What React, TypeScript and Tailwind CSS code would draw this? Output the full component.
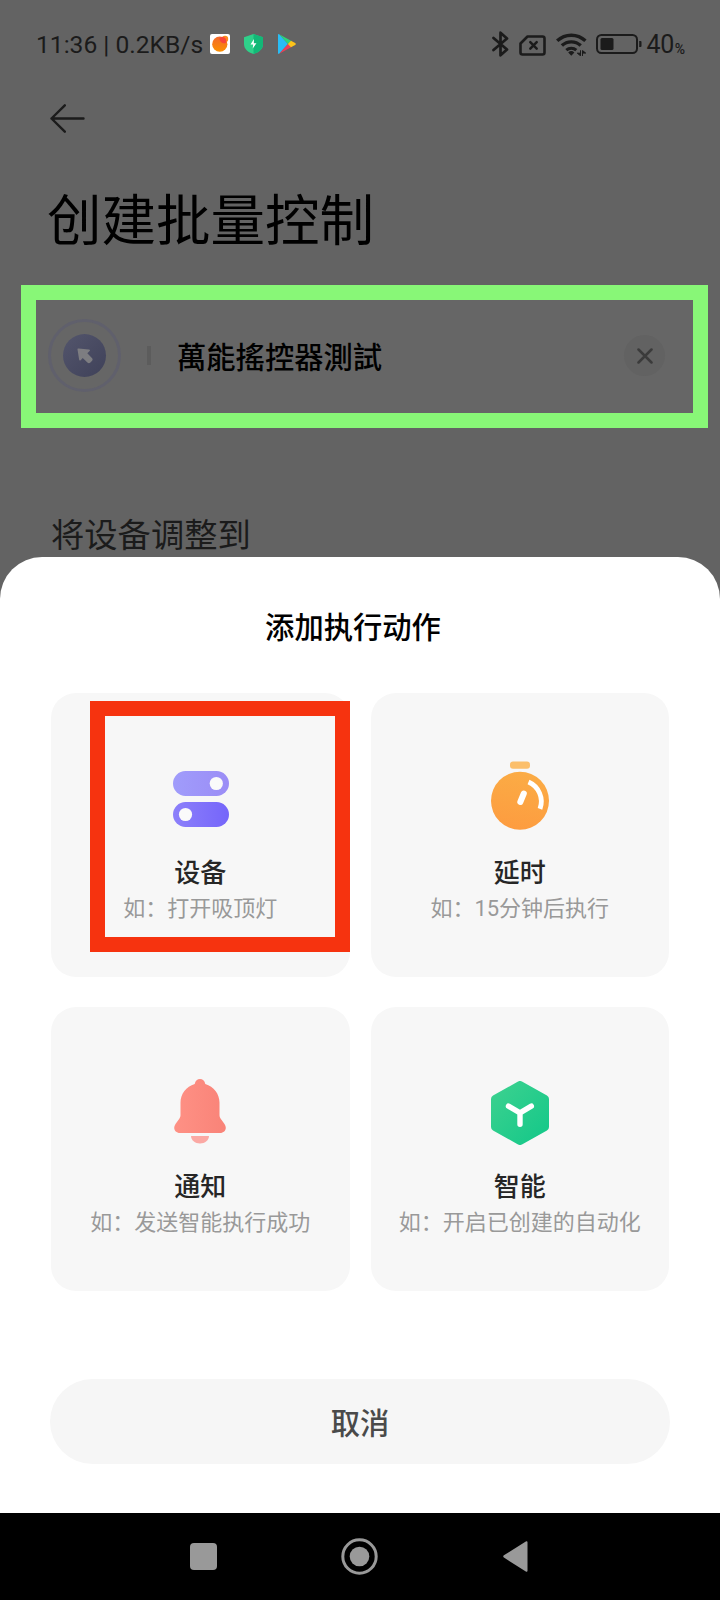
import React from 'react';

function StatusBar() {
  return (
    <div className="h-[88px] pl-[36px] pr-[35px] flex items-center justify-between text-[#1b1b1b]">
      <div className="flex items-center">
        <span className="w-[174px] mt-[2px] text-[24.600px] leading-8 whitespace-nowrap">11:36 | 0.2KB/s</span>
        <svg width="20" height="20" viewBox="0 0 20 20" className="mr-[14px]">
          <defs>
            <linearGradient id="orange" x1="0" y1="0" x2="0" y2="1">
              <stop offset="0" stopColor="#f4682c" />
              <stop offset="1" stopColor="#fb9000" />
            </linearGradient>
          </defs>
          <rect width="20" height="20" rx="2" fill="#fff" />
          <circle cx="9.800" cy="10.200" r="7.600" fill="url(#orange)" />
          <circle cx="15" cy="5" r="3.200" fill="#fb8a1c" />
          <path d="M9.400 4.500c1.500-1.800 4.500-2 6-.3 1.200 1.400 1.300 3.600.2 4.700-2.600 1.300-5.700-.6-6.200-4.400z" fill="#f7453a" />
        </svg>
        <svg width="19" height="20" viewBox="0 0 19 20" className="mr-[15px]">
          <path d="M9.500 0L19 3.200V10c0 5-4 8.300-9.500 10C4 18.300 0 15 0 10V3.200z" fill="#2fd08a" />
          <path d="M9.500 0L19 3.200V10c0 5-4 8.300-9.500 10z" fill="#12b877" />
          <path d="M10 5L6.500 10.400h2.700l-.5 4 3.800-5.200H9.800z" fill="#fff" />
        </svg>
        <svg width="18" height="20" viewBox="0 0 18 20">
          <path d="M0 1v18c0 .8.500 1.200 1.200.8L10 10 1.200.2C.5-.2 0 .2 0 1z" fill="#29bdf5" />
          <path d="M1.200.200L13.500 7 10 10z" fill="#2dd37b" />
          <path d="M1.200 19.800L13.500 13 10 10z" fill="#ee3f56" />
          <path d="M13 6.800l4.200 2.300c.8.500.8 1.300 0 1.800L13 13.200 9.800 10z" fill="#fcc31a" />
        </svg>
      </div>

      <div className="flex items-center">
        <svg width="17" height="26" viewBox="0 0 17 26" className="mr-[10px]" fill="none" stroke="currentColor" strokeWidth="2.700" strokeLinejoin="round" strokeLinecap="round">
          <path d="M1.500 7l13.500 11.500-6.500 5.800V1.700l6.500 5.800-13.500 11.500" />
        </svg>
        <svg width="27" height="21" viewBox="0 0 27 21" className="mr-[10px] mt-[2px]" fill="none" stroke="currentColor" strokeWidth="2.600" strokeLinejoin="round" strokeLinecap="round">
          <path d="M8.500 1.500H23.500a2 2 0 0 1 2 2V17.500a2 2 0 0 1-2 2H3.500a2 2 0 0 1-2-2V8.500z" />
          <path d="M11.300 7.200l6.400 6.400M17.700 7.200l-6.400 6.400" strokeWidth="2.500" />
        </svg>
        <svg width="31" height="23" viewBox="0 0 31 23" className="mr-[9px]" fill="none" stroke="currentColor" strokeWidth="3.400">
          <path d="M1.200 7.800a20.500 20.500 0 0 1 28.200 0" />
          <path d="M5.900 12.600a13.600 13.600 0 0 1 18.800 0" />
          <path d="M10.300 17.100a7.500 7.500 0 0 1 10 0" strokeWidth="3" />
          <path d="M12.200 19.400a4.500 4.500 0 0 1 6.200 0L15.300 22.800z" fill="currentColor" stroke="none" />
          <path d="M24.500 17.500v5.300l-3.200-2.600h3.200zM26.500 22.800v-5.300l3.200 2.600h-3.200z" fill="currentColor" strokeWidth="1" />
        </svg>
        <svg width="47" height="20" viewBox="0 0 47 20" className="mr-[4px]">
          <rect x="1" y="1" width="40" height="18" rx="4.500" fill="none" stroke="currentColor" strokeWidth="2" />
          <rect x="4.500" y="4" width="13" height="12" rx="1.500" fill="currentColor" />
          <path d="M43.200 7h1.300a1 1 0 0 1 1 1v4a1 1 0 0 1-1 1h-1.300z" fill="currentColor" />
        </svg>
        <span className="mt-[2px] text-[25px] leading-8 tracking-[-0.500px]">40</span>
        <span className="ml-px text-[14px] leading-4 font-medium mt-[9px]">%</span>
      </div>
    </div>
  );
}

function SwitchesIcon() {
  return (
    <svg width="56" height="56" viewBox="0 0 56 56">
      <defs>
        <linearGradient id="switchTop">
          <stop offset="0" stopColor="#a09cfb" />
          <stop offset="1" stopColor="#9b8df6" />
        </linearGradient>
        <linearGradient id="switchBottom">
          <stop offset="0" stopColor="#8c80fa" />
          <stop offset="1" stopColor="#7565fa" />
        </linearGradient>
      </defs>
      <rect width="56" height="25" rx="12.500" fill="url(#switchTop)" />
      <circle cx="43.300" cy="12.500" r="6.600" fill="#fafafa" />
      <rect y="31" width="56" height="25" rx="12.500" fill="url(#switchBottom)" />
      <circle cx="12.500" cy="43.500" r="6.600" fill="#fafafa" />
    </svg>
  );
}

function TimerIcon() {
  return (
    <svg width="58" height="69" viewBox="0 0 58 69">
      <defs>
        <linearGradient id="timer" x1="0.600" y1="0" x2="0.400" y2="1">
          <stop offset="0" stopColor="#fbac45" />
          <stop offset="1" stopColor="#fd9c40" />
        </linearGradient>
      </defs>
      <rect x="19" y="0.500" width="20" height="7.200" rx="3" fill="#fbbf6b" />
      <circle cx="29" cy="39.800" r="29" fill="url(#timer)" />
      <path d="M37.500 21A21.200 21.200 0 0 1 49 47.800" fill="none" stroke="#fff" strokeWidth="4.800" />
      <path d="M29.300 41l3.500-8.500" stroke="#fff" strokeWidth="6" strokeLinecap="round" />
    </svg>
  );
}

function BellIcon() {
  return (
    <svg width="52" height="65" viewBox="0 0 52 65">
      <defs>
        <linearGradient id="bell">
          <stop offset="0" stopColor="#fe9185" />
          <stop offset="1" stopColor="#f98378" />
        </linearGradient>
      </defs>
      <path
        d="M26 0c2.600 0 4.700 1.900 5.300 4.900C39.800 7.300 45.500 15 45.500 23.500V36c0 1.500.4 2.600 1.200 3.700l3.800 5.300c3 4.200.5 9-4.500 9H6c-5 0-7.500-4.800-4.500-9l3.800-5.300C6.100 38.600 6.500 37.500 6.500 36V23.500C6.500 15 12.200 7.300 20.700 4.900 21.300 1.900 23.400 0 26 0z"
        fill="url(#bell)"
      />
      <path d="M17 57h18c0 4-4 7.500-9 7.500S17 61 17 57z" fill="#fba9a4" />
    </svg>
  );
}

function HexagonIcon() {
  return (
    <svg width="58" height="64" viewBox="0 0 58 64">
      <defs>
        <linearGradient id="hexagon" x1="0" y1="0" x2="1" y2="1">
          <stop offset="0" stopColor="#3bd18f" />
          <stop offset="1" stopColor="#15c889" />
        </linearGradient>
      </defs>
      <path d="M29 4L54 18V46L29 60 4 46V18z" fill="url(#hexagon)" stroke="url(#hexagon)" strokeWidth="8" strokeLinejoin="round" />
      <path d="M17.500 25.200L29 31.800l11.300-6.600M29 31.800V43.300" fill="none" stroke="#fff" strokeWidth="5.400" strokeLinecap="round" strokeLinejoin="round" />
    </svg>
  );
}

const actions = [
  { title: '设备', hint: '如：打开吸顶灯', icon: <SwitchesIcon />, iconBox: 'pt-[78px] pl-px', highlighted: true },
  { title: '延时', hint: '如：15分钟后执行', icon: <TimerIcon />, iconBox: 'pt-[68px]' },
  { title: '通知', hint: '如：发送智能执行成功', icon: <BellIcon />, iconBox: 'pt-[72px]' },
  { title: '智能', hint: '如：开启已创建的自动化', icon: <HexagonIcon />, iconBox: 'pt-[74px]' },
];

export default function App() {
  return (
    <div className="w-[720px] h-[1600px] overflow-hidden flex flex-col bg-[#636363] font-['Roboto','Noto_Sans_CJK_SC',sans-serif]">

      {/* Dimmed page */}
      <div className="h-[557px] shrink-0">
        <StatusBar />

        <div className="h-[61px] pl-[50px] flex items-center">
          <svg width="35" height="29" viewBox="0 0 35 29" fill="none" stroke="#1b1b1b" strokeWidth="2.400" strokeLinecap="round" strokeLinejoin="round">
            <path d="M14.800 1.300L1.500 14.500l13.300 13.200M1.500 14.500H33.500" />
          </svg>
        </div>

        <h1 className="h-[136px] pl-[47px] pt-[32px] text-[54.500px] leading-[80px] font-normal text-black">创建批量控制</h1>

        <div className="ml-[21px] mr-[12px] h-[143px] border-[15px] border-[#88f777] bg-[#666666] pl-[12px] pr-[28px] pb-[2px] flex items-center">
          <div className="w-[73px] h-[73px] rounded-full border-[3px] border-[#60606c] flex items-center justify-center">
            <div className="w-[43px] h-[43px] rounded-full bg-linear-to-br from-[#53556c] to-[#3f4159] flex items-center justify-center">
              <svg width="16" height="16" viewBox="0 0 16 16">
                <path d="M1.500.500L12 1.500c1 .1 1.300.9.600 1.500L10.300 5.300l4.600 4.600c1 1 .9 2 0 3l-1.500 1.600c-1 1-2 1-3 0L5.700 9.900 3.700 12.200c-.7.700-1.500.4-1.600-.6L.5 1.500C.4.8.9.4 1.500.5z" fill="#7d7d81" />
              </svg>
            </div>
          </div>
          <div className="ml-[26px] w-[4px] h-[19px] bg-[#5c5c5c]" />
          <span className="ml-[26px] mb-[2px] text-[29.300px] leading-10 font-medium text-black font-['Noto_Sans_CJK_TC',sans-serif]">萬能搖控器測試</span>
          <div className="ml-auto w-[41px] h-[41px] rounded-full bg-[#626262] flex items-center justify-center">
            <svg width="16" height="16" viewBox="0 0 16 16" stroke="#3b3b3b" strokeWidth="2.500" strokeLinecap="round">
              <path d="M1.500 1.500l13 13M14.500 1.500l-13 13" />
            </svg>
          </div>
        </div>

        <p className="pl-[51px] pt-[84px] text-[33.300px] leading-[48px] text-[#1b1b1b]">将设备调整到</p>
      </div>

      {/* Bottom sheet */}
      <div className="h-[956px] shrink-0 bg-white rounded-t-[42px] px-[51px] flex flex-col">
        <h2 className="pt-[51px] h-[136px] pr-[14px] text-center text-[29.300px] leading-10 font-medium text-black">添加执行动作</h2>

        <div className="grid grid-cols-2 gap-x-[21px] gap-y-[30px]">
          {actions.map((action) => (
            <div key={action.title} className="relative h-[284px] rounded-[25px] bg-[#f7f7f7] flex flex-col items-center">
              <div className={`h-[161px] ${action.iconBox}`}>{action.icon}</div>
              <h3 className="text-[26px] leading-[38px] font-medium text-[#262626]">{action.title}</h3>
              <p className="text-[22px] leading-[34px] text-[#999999] whitespace-nowrap">{action.hint}</p>
              {action.highlighted && (
                <div className="absolute left-[39px] top-[8px] w-[260px] h-[251px] border-[15px] border-[#f6330f]" />
              )}
            </div>
          ))}
        </div>

        <button className="mt-[88px] -mx-px pt-[5px] h-[85px] shrink-0 rounded-full bg-[#f6f6f6] text-[29.300px] leading-10 font-medium text-[#4a4a4a]">取消</button>
      </div>

      {/* System navigation */}
      <div className="h-[87px] shrink-0 bg-black pl-[190px] pr-[192px] flex items-center justify-between">
        <div className="w-[27px] h-[27px] rounded-[4px] bg-[#999999]" />
        <svg width="37" height="37" viewBox="0 0 37 37" className="mr-[2px]">
          <circle cx="18.500" cy="18.500" r="16.700" fill="none" stroke="#999" strokeWidth="3" />
          <circle cx="18.500" cy="18.500" r="9.800" fill="#999" />
        </svg>
        <svg width="25" height="31" viewBox="0 0 25 31">
          <path d="M22.800.500L.9 14.300c-.9.600-.9 1.600 0 2.300L22.800 30.500c1 .6 1.700.2 1.700-.8V1.300c0-1-.7-1.400-1.700-.8z" fill="#999" />
        </svg>
      </div>
    </div>
  );
}
